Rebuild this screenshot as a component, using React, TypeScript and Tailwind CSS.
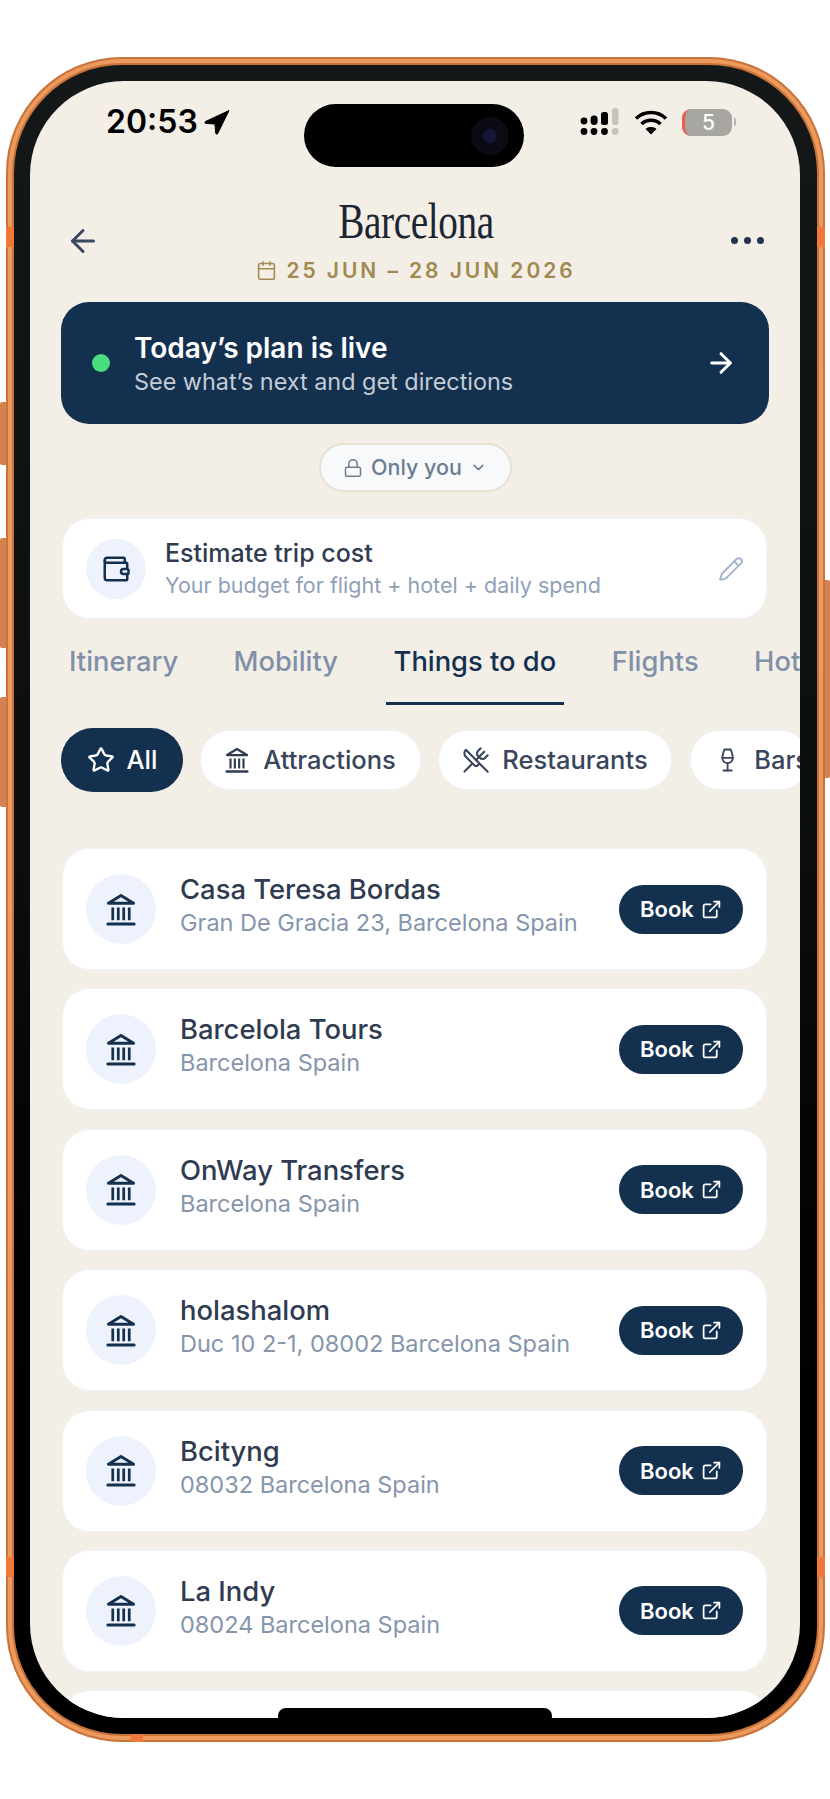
import { ArrowLeft, ArrowRight, Calendar, ChevronDown, ExternalLink, Lock, Pencil, Star, UtensilsCrossed, Wallet, Wine } from 'lucide-react';

const places = [
  { name: 'Casa Teresa Bordas', address: 'Gran De Gracia 23, Barcelona Spain' },
  { name: 'Barcelola Tours', address: 'Barcelona Spain' },
  { name: 'OnWay Transfers', address: 'Barcelona Spain' },
  { name: 'holashalom', address: 'Duc 10 2-1, 08002 Barcelona Spain' },
  { name: 'Bcityng', address: '08032 Barcelona Spain' },
  { name: 'La Indy', address: '08024 Barcelona Spain' },
];

const tabs = ['Itinerary', 'Mobility', 'Things to do', 'Flights', 'Hotels'];

function BankIcon({ className }: { className: string }) {
  return (
    <svg viewBox="0 0 30 34" fill="none" stroke="currentColor" className={className}>
      <path d="M2 10.5 15 2.5l13 8Z" strokeWidth="3" strokeLinejoin="round" />
      <path d="M6.5 15v13M12.2 15v13M17.8 15v13M23.5 15v13" strokeWidth="2.8" />
      <path d="M1.5 32h27" strokeWidth="3.2" strokeLinecap="round" />
    </svg>
  );
}

function SignalIcon() {
  return (
    <svg viewBox="0 0 40 28" className="h-[28px] w-[40px]">
      <circle cx="4" cy="13" r="3.4" fill="#000" />
      <circle cx="4" cy="23.5" r="3.4" fill="#000" />
      <rect x="10.6" y="7.5" width="7" height="9.5" rx="3.4" fill="#000" />
      <circle cx="14" cy="23.5" r="3.4" fill="#000" />
      <rect x="21" y="4" width="7" height="13" rx="2.5" fill="#000" />
      <circle cx="24.5" cy="23.5" r="3.4" fill="#000" />
      <rect x="32" y="0" width="6.5" height="17" rx="2.5" fill="#c5c3bf" />
      <circle cx="35.2" cy="23.5" r="3.4" fill="#c5c3bf" />
    </svg>
  );
}

function WifiIcon() {
  return (
    <svg viewBox="0 0 34 26" fill="none" stroke="#000" strokeWidth="3.6" className="h-[26px] w-[34px]">
      <path d="M2 9.5c8.5-8 21.5-8 30 0" />
      <path d="M7.5 15c5.5-5 13.5-5 19 0" />
      <path d="M17 25.5 11.5 20c3-2.6 8-2.6 11 0Z" fill="#000" stroke="none" />
    </svg>
  );
}

function StatusBar() {
  return (
    <div className="flex h-[82px] items-center justify-between pl-[76px] pr-[64px]">
      <div className="flex items-center gap-[6px]">
        <span className="text-[32px] font-semibold leading-none text-black">20:53</span>
        <svg viewBox="0 0 26 26" className="h-[26px] w-[26px]">
          <path d="M25 1.5 1.5 12.5c-1 .6-.7 1.8.4 1.9l9 .6.9 9.2c.1 1.1 1.4 1.3 1.9.3Z" fill="#000" stroke="#000" strokeLinejoin="round" />
        </svg>
      </div>
      <div className="flex items-center gap-[14px]">
        <SignalIcon />
        <WifiIcon />
        <div className="flex items-center gap-[2px]">
          <div className="flex h-[27px] w-[50px] items-center justify-center overflow-hidden rounded-[9px] border-l-[3px] border-[#ee5a4c] bg-[#a8a6a0] text-[21px] font-medium leading-none text-white">
            5
          </div>
          <div className="h-[8px] w-[2px] rounded-r bg-[#b5b3ae]" />
        </div>
      </div>
    </div>
  );
}

function PlaceCard({ name, address }: { name: string; address: string }) {
  return (
    <div className="flex h-[122px] shrink-0 items-center rounded-[28px] border border-[#f0f3f9] bg-white pl-[23px] pr-[23px]">
      <div className="flex h-[70px] w-[70px] shrink-0 items-center justify-center rounded-full bg-[#edf2fc]">
        <BankIcon className="h-[33px] w-[30px] text-[#14304f]" />
      </div>
      <div className="ml-[24px] flex min-w-0 flex-1 flex-col gap-[2px] pb-[8px]">
        <span className="text-[27.4px] leading-[34px] text-[#2f3b50] [font-weight:450]">{name}</span>
        <span className="text-[23.5px] leading-[30px] text-[#8595ab]">{address}</span>
      </div>
      <button className="flex h-[49px] w-[124px] shrink-0 items-center justify-center gap-[7px] rounded-full bg-[#14304f] text-[22px] font-semibold leading-none text-white">
        Book
        <ExternalLink className="h-[21px] w-[21px]" strokeWidth={2} />
      </button>
    </div>
  );
}

function App() {
  return (
    <div className="h-[1799px] w-[830px] overflow-hidden bg-white pl-[6px] pt-[57px] font-['Inter',sans-serif]">
      <div className="relative h-[1685px] w-[819px] rounded-[116px] bg-[#c8733a] p-[2px]">
        {/* side buttons */}
        <div className="absolute -left-[6px] top-[345px] h-[63px] w-[6px] rounded-l-[2px] bg-[#d5804f]" />
        <div className="absolute -left-[6px] top-[481px] h-[110px] w-[6px] rounded-l-[2px] bg-[#d5804f]" />
        <div className="absolute -left-[6px] top-[640px] h-[110px] w-[6px] rounded-l-[2px] bg-[#d5804f]" />
        <div className="absolute -right-[5px] top-[523px] h-[198px] w-[5px] rounded-r-[2px] bg-[#d5804f]" />

        <div className="h-full w-full rounded-[114px] bg-[#ec9a5e] p-[4px]">
          <div className="h-full w-full rounded-[110px] bg-[#c8733a] p-[2px]">
            {/* black bezel */}
            <div className="h-full w-full rounded-[108px] bg-linear-to-b from-[#141818] via-[#0b0d0d] to-black p-[16px]">
              <div className="relative h-[1637px] w-[770px] overflow-hidden rounded-[94px] bg-[#f3efe7] text-[#2f3b50]">
                {/* dynamic island */}
                <div className="absolute left-[274px] top-[23px] flex h-[63px] w-[220px] items-center justify-end rounded-full bg-black pr-[15px]">
                  <div className="flex h-[38px] w-[38px] items-center justify-center rounded-full bg-[#0b0b14]">
                    <div className="h-[14px] w-[14px] rounded-full bg-[#15153a]" />
                  </div>
                </div>

                <StatusBar />

                {/* header */}
                <div className="mt-[34px] flex items-center justify-between pl-[35px] pr-[36px]">
                  <ArrowLeft className="h-[36px] w-[36px] text-[#39475f]" strokeWidth={2} />
                  <div className="flex flex-col items-center gap-[11px]">
                    <h1 className="h-[48px] scale-x-[0.785] whitespace-nowrap font-['Liberation_Serif',serif] text-[50px] font-normal leading-[48px] tracking-[-0.01em] text-[#1d2533]">
                      Barcelona
                    </h1>
                    <div className="flex h-[28px] items-center gap-[9px] text-[#a08a4f]">
                      <Calendar className="h-[21px] w-[21px]" strokeWidth={1.8} />
                      <span className="text-[21px] font-semibold leading-none tracking-[0.14em]">25 JUN – 28 JUN 2026</span>
                    </div>
                  </div>
                  <div className="flex w-[33px] items-center justify-between">
                    <div className="h-[7px] w-[7px] rounded-full bg-[#253350]" />
                    <div className="h-[7px] w-[7px] rounded-full bg-[#253350]" />
                    <div className="h-[7px] w-[7px] rounded-full bg-[#253350]" />
                  </div>
                </div>

                {/* live plan banner */}
                <div className="ml-[31px] mr-[31px] mt-[18px] flex h-[122px] items-center rounded-[28px] bg-[#14304f] pl-[31px] pr-[32px]">
                  <div className="h-[18px] w-[18px] rounded-full bg-[#4ade80]" />
                  <div className="ml-[24px] flex flex-1 flex-col">
                    <span className="text-[28px] font-semibold leading-[36px] text-white">Today’s plan is live</span>
                    <span className="pt-[1px] text-[23.4px] leading-[30px] text-[#c4ccd6]">See what’s next and get directions</span>
                  </div>
                  <ArrowRight className="h-[32px] w-[32px] text-white" strokeWidth={2.2} />
                </div>

                {/* visibility */}
                <div className="mt-[19px] flex justify-center">
                  <div className="flex h-[49px] w-[193px] items-center justify-center gap-[8px] rounded-full border-2 border-[#e6e1d2] bg-[#f8f9fb] text-[21.5px] leading-none text-[#6d7c92] [font-weight:450]">
                    <Lock className="h-[20px] w-[20px]" strokeWidth={1.8} />
                    Only you
                    <ChevronDown className="h-[17px] w-[17px]" strokeWidth={2} />
                  </div>
                </div>

                {/* trip cost */}
                <div className="ml-[32px] mr-[33px] mt-[26px] flex h-[101px] items-center rounded-[28px] border border-[#f0f3f9] bg-white pl-[23px] pr-[22px]">
                  <div className="flex h-[60px] w-[60px] items-center justify-center rounded-full bg-[#edf2fc]">
                    <Wallet className="h-[30px] w-[30px] text-[#14304f]" strokeWidth={2} />
                  </div>
                  <div className="ml-[19px] flex flex-1 flex-col gap-[2px]">
                    <span className="text-[25px] leading-[31px] text-[#2f3b50] [font-weight:450]">Estimate trip cost</span>
                    <span className="text-[21.5px] leading-[28px] text-[#8ea0b7]">Your budget for flight + hotel + daily spend</span>
                  </div>
                  <Pencil className="h-[26px] w-[26px] text-[#a5b4c8]" strokeWidth={1.8} />
                </div>

                {/* tabs */}
                <div className="mt-[20px] flex gap-[39.5px] overflow-hidden pl-[31px]">
                  {tabs.map((tab) => (
                    <div
                      key={tab}
                      className={
                        tab === 'Things to do'
                          ? 'shrink-0 whitespace-nowrap border-b-[3px] border-[#14304f] px-[8px] pb-[24px] pt-[7px] text-[27.3px] font-medium leading-[32px] text-[#14304f]'
                          : 'shrink-0 whitespace-nowrap border-b-[3px] border-transparent px-[8px] pb-[24px] pt-[7px] text-[27.3px] leading-[32px] text-[#7f90a8] [font-weight:450]'
                      }
                    >
                      {tab}
                    </div>
                  ))}
                </div>

                {/* category chips */}
                <div className="mt-[23px] flex items-center gap-[18px] overflow-hidden pl-[31px]">
                  <div className="flex h-[64px] w-[122px] shrink-0 items-center justify-center gap-[12px] rounded-full bg-[#14304f] text-[25.5px] font-medium leading-none text-white">
                    <Star className="h-[28px] w-[28px]" strokeWidth={2} />
                    All
                  </div>
                  <div className="-ml-[1px] flex h-[60px] w-[221px] shrink-0 items-center justify-center gap-[14px] rounded-full border border-[#f0f3f9] bg-white text-[25.5px] leading-none text-[#38455b] [font-weight:450]">
                    <BankIcon className="h-[26px] w-[24px] text-[#2f3b50]" />
                    Attractions
                  </div>
                  <div className="-ml-[1px] flex h-[60px] w-[234px] shrink-0 items-center justify-center gap-[12px] rounded-full border border-[#f0f3f9] bg-white text-[25.5px] leading-none text-[#38455b] [font-weight:450]">
                    <UtensilsCrossed className="h-[28px] w-[28px]" strokeWidth={1.8} />
                    Restaurants
                  </div>
                  <div className="flex h-[60px] w-[120px] shrink-0 items-center justify-start gap-[14px] rounded-full border border-[#f0f3f9] bg-white pl-[24px] text-[25.5px] leading-none text-[#38455b] [font-weight:450]">
                    <Wine className="h-[28px] w-[28px]" strokeWidth={1.8} />
                    Bars
                  </div>
                </div>

                {/* places */}
                <div className="ml-[32px] mr-[33px] mt-[56px] flex flex-col gap-[18.4px]">
                  {places.map((place) => (
                    <PlaceCard key={place.name} name={place.name} address={place.address} />
                  ))}
                  <div className="h-[122px] shrink-0 rounded-[28px] border border-[#f0f3f9] bg-white" />
                </div>

                {/* home indicator */}
                <div className="absolute -bottom-[6px] left-[248px] h-[16px] w-[274px] rounded-full bg-black" />
              </div>
            </div>
          </div>
        </div>

        {/* antenna bands */}
        <div className="absolute left-0 top-[170px] h-[20px] w-[8px] bg-[#f0783a]" />
        <div className="absolute right-0 top-[170px] h-[20px] w-[8px] bg-[#f0783a]" />
        <div className="absolute bottom-0 left-[125px] h-[8px] w-[12px] bg-[#f0783a]" />
        <div className="absolute bottom-[165px] left-0 h-[20px] w-[8px] bg-[#f0783a]" />
        <div className="absolute bottom-[165px] right-0 h-[20px] w-[8px] bg-[#f0783a]" />
      </div>
    </div>
  );
}

export default App;
